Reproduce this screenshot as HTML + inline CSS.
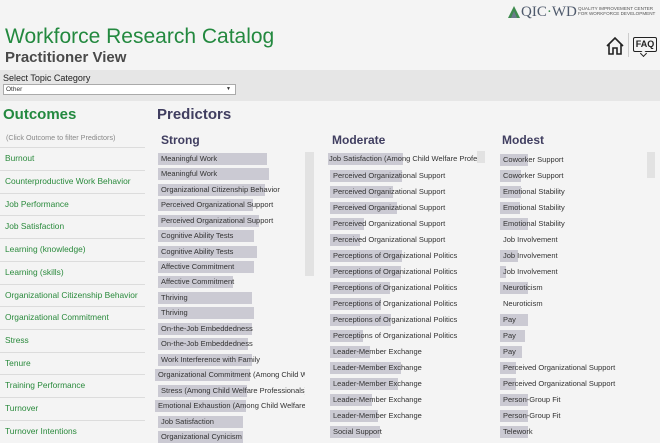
<!DOCTYPE html>
<html><head><meta charset="utf-8"><style>
*{margin:0;padding:0;box-sizing:border-box}
body{width:660px;height:442px;overflow:hidden;background:#f4f4f4;font-family:"Liberation Sans",sans-serif;position:relative}
.a{position:absolute;white-space:nowrap}
.r{position:absolute;height:12px;font-size:7.5px;color:#333;line-height:12px;white-space:nowrap}
.r b{position:absolute;left:0;top:0;height:12px;background:#cbcad3;font-weight:normal}
.r span{position:relative;padding-left:3px}
.o{position:absolute;left:5px;font-size:8.4px;color:#2a8a3c;line-height:12px}
.ln{position:absolute;left:0;width:145px;height:1px;background:#dcdcdc}
</style></head><body>
<div class="a" style="left:5px;top:25px;font-size:21px;color:#23893f">Workforce Research Catalog</div>
<div class="a" style="left:5px;top:49px;font-size:15px;font-weight:bold;color:#4a4a4a">Practitioner View</div>
<div class="a" style="left:507px;top:5px;width:14px;height:14px;"><svg width="14" height="14"><polygon points="7,1 13,13 1,13" fill="#3e8a4e"/><polygon points="7,6 10,13 4,13" fill="#6b7a8c"/></svg></div>
<div class="a" style="left:521px;top:4px;font-family:'Liberation Serif',serif;font-size:15px;color:#4f5a6c">QIC<span style="color:#3a8a4a">·</span>WD</div>
<div class="a" style="left:578px;top:6px;font-size:4.6px;color:#555;line-height:5px">QUALITY IMPROVEMENT CENTER<br>FOR WORKFORCE DEVELOPMENT</div>
<svg class="a" style="left:605px;top:36px" width="20" height="20" viewBox="0 0 20 20"><path d="M2 10 L10 2 L18 10 M4 8 V18 H8 V12 H12 V18 H16 V8" fill="none" stroke="#222" stroke-width="1.6"/></svg>
<div class="a" style="left:628px;top:33px;width:1px;height:24px;background:#ccc"></div>
<div class="a" style="left:633px;top:37px;width:24px;height:15px;border:1.5px solid #222;border-radius:2px;font-size:9px;font-weight:bold;text-align:center;line-height:12px;color:#222">FAQ</div>
<div class="a" style="left:641px;top:51px;width:5px;height:5px;border-right:1.5px solid #222;border-bottom:1.5px solid #222;transform:rotate(45deg);background:#f4f4f4"></div>
<div class="a" style="left:0;top:70px;width:660px;height:31px;background:#e6e6e6"></div>
<div class="a" style="left:3px;top:73px;font-size:9px;color:#222">Select Topic Category</div>
<div class="a" style="left:3px;top:84px;width:233px;height:11px;background:#fff;border:1px solid #aaa;font-size:6.5px;line-height:9px;padding-left:2px;color:#333">Other<span style="position:absolute;right:4px;font-size:5px">▼</span></div>
<div class="a" style="left:3px;top:106px;font-size:15px;font-weight:bold;color:#23893f">Outcomes</div>
<div class="a" style="left:157px;top:106px;font-size:15px;font-weight:bold;color:#403e60">Predictors</div>
<div class="a" style="left:6px;top:133px;font-size:7.2px;color:#888">(Click Outcome to filter Predictors)</div>
<div class="ln" style="top:147px"></div><div class="o" style="top:152px">Burnout</div>
<div class="ln" style="top:170px"></div><div class="o" style="top:175px">Counterproductive Work Behavior</div>
<div class="ln" style="top:193px"></div><div class="o" style="top:198px">Job Performance</div>
<div class="ln" style="top:215px"></div><div class="o" style="top:220px">Job Satisfaction</div>
<div class="ln" style="top:238px"></div><div class="o" style="top:243px">Learning (knowledge)</div>
<div class="ln" style="top:261px"></div><div class="o" style="top:266px">Learning (skills)</div>
<div class="ln" style="top:284px"></div><div class="o" style="top:289px">Organizational Citizenship Behavior</div>
<div class="ln" style="top:306px"></div><div class="o" style="top:311px">Organizational Commitment</div>
<div class="ln" style="top:329px"></div><div class="o" style="top:334px">Stress</div>
<div class="ln" style="top:352px"></div><div class="o" style="top:357px">Tenure</div>
<div class="ln" style="top:374px"></div><div class="o" style="top:379px">Training Performance</div>
<div class="ln" style="top:397px"></div><div class="o" style="top:402px">Turnover</div>
<div class="ln" style="top:420px"></div><div class="o" style="top:425px">Turnover Intentions</div>

<div class="a" style="left:161px;top:133px;font-size:12px;font-weight:bold;color:#403e60">Strong</div>
<div class="a" style="left:332px;top:133px;font-size:12px;font-weight:bold;color:#403e60">Moderate</div>
<div class="a" style="left:502px;top:133px;font-size:12px;font-weight:bold;color:#403e60">Modest</div>
<div class="a" style="left:305px;top:152px;width:9px;height:124px;background:#e2e2e2"></div>
<div class="a" style="left:477px;top:151px;width:8px;height:12px;background:#e2e2e2"></div>
<div class="a" style="left:647px;top:152px;width:8px;height:26px;background:#e2e2e2"></div>

<div class="r" style="left:158px;top:153px"><b style="width:109px"></b><span>Meaningful Work</span></div>
<div class="r" style="left:158px;top:168px"><b style="width:111px"></b><span>Meaningful Work</span></div>
<div class="r" style="left:158px;top:184px"><b style="width:107px"></b><span>Organizational Citizenship Behavior</span></div>
<div class="r" style="left:158px;top:199px"><b style="width:95px"></b><span>Perceived Organizational Support</span></div>
<div class="r" style="left:158px;top:215px"><b style="width:101px"></b><span>Perceived Organizational Support</span></div>
<div class="r" style="left:158px;top:230px"><b style="width:96px"></b><span>Cognitive Ability Tests</span></div>
<div class="r" style="left:158px;top:246px"><b style="width:99px"></b><span>Cognitive Ability Tests</span></div>
<div class="r" style="left:158px;top:261px"><b style="width:96px"></b><span>Affective Commitment</span></div>
<div class="r" style="left:158px;top:276px"><b style="width:75px"></b><span>Affective Commitment</span></div>
<div class="r" style="left:158px;top:292px"><b style="width:94px"></b><span>Thriving</span></div>
<div class="r" style="left:158px;top:307px"><b style="width:96px"></b><span>Thriving</span></div>
<div class="r" style="left:158px;top:323px"><b style="width:94px"></b><span>On-the-Job Embeddedness</span></div>
<div class="r" style="left:158px;top:338px"><b style="width:90px"></b><span>On-the-Job Embeddedness</span></div>
<div class="r" style="left:158px;top:354px"><b style="width:94px"></b><span>Work Interference with Family</span></div>
<div class="r" style="left:155px;top:369px;width:150px;overflow:hidden"><b style="width:95px"></b><span>Organizational Commitment (Among Child Welfare</span></div>
<div class="r" style="left:158px;top:385px;width:147px;overflow:hidden"><b style="width:89px"></b><span>Stress (Among Child Welfare Professionals)</span></div>
<div class="r" style="left:155px;top:400px;width:150px;overflow:hidden"><b style="width:91px"></b><span>Emotional Exhaustion (Among Child Welfare</span></div>
<div class="r" style="left:158px;top:416px"><b style="width:85px"></b><span>Job Satisfaction</span></div>
<div class="r" style="left:158px;top:431px"><b style="width:85px"></b><span>Organizational Cynicism</span></div>

<div class="r" style="left:328px;top:153px;width:149px;overflow:hidden"><b style="width:75px"></b><span style="padding-left:1px">Job Satisfaction (Among Child Welfare Professionals)</span></div>
<div class="r" style="left:330px;top:170px"><b style="width:72px"></b><span>Perceived Organizational Support</span></div>
<div class="r" style="left:330px;top:186px"><b style="width:63px"></b><span>Perceived Organizational Support</span></div>
<div class="r" style="left:330px;top:202px"><b style="width:67px"></b><span>Perceived Organizational Support</span></div>
<div class="r" style="left:330px;top:218px"><b style="width:34px"></b><span>Perceived Organizational Support</span></div>
<div class="r" style="left:330px;top:234px"><b style="width:30px"></b><span>Perceived Organizational Support</span></div>
<div class="r" style="left:330px;top:250px"><b style="width:72px"></b><span>Perceptions of Organizational Politics</span></div>
<div class="r" style="left:330px;top:266px"><b style="width:71px"></b><span>Perceptions of Organizational Politics</span></div>
<div class="r" style="left:330px;top:282px"><b style="width:60px"></b><span>Perceptions of Organizational Politics</span></div>
<div class="r" style="left:330px;top:298px"><b style="width:51px"></b><span>Perceptions of Organizational Politics</span></div>
<div class="r" style="left:330px;top:314px"><b style="width:61px"></b><span>Perceptions of Organizational Politics</span></div>
<div class="r" style="left:330px;top:330px"><b style="width:33px"></b><span>Perceptions of Organizational Politics</span></div>
<div class="r" style="left:330px;top:346px"><b style="width:40px"></b><span>Leader-Member Exchange</span></div>
<div class="r" style="left:330px;top:362px"><b style="width:71px"></b><span>Leader-Member Exchange</span></div>
<div class="r" style="left:330px;top:378px"><b style="width:68px"></b><span>Leader-Member Exchange</span></div>
<div class="r" style="left:330px;top:394px"><b style="width:42px"></b><span>Leader-Member Exchange</span></div>
<div class="r" style="left:330px;top:410px"><b style="width:48px"></b><span>Leader-Member Exchange</span></div>
<div class="r" style="left:330px;top:426px"><b style="width:50px"></b><span>Social Support</span></div>

<div class="r" style="left:500px;top:154px"><b style="width:28px"></b><span>Coworker Support</span></div>
<div class="r" style="left:500px;top:170px"><b style="width:21px"></b><span>Coworker Support</span></div>
<div class="r" style="left:500px;top:186px"><b style="width:21px"></b><span>Emotional Stability</span></div>
<div class="r" style="left:500px;top:202px"><b style="width:20px"></b><span>Emotional Stability</span></div>
<div class="r" style="left:500px;top:218px"><b style="width:28px"></b><span>Emotional Stability</span></div>
<div class="r" style="left:500px;top:234px"><span>Job Involvement</span></div>
<div class="r" style="left:500px;top:250px"><b style="width:18px"></b><span>Job Involvement</span></div>
<div class="r" style="left:500px;top:266px"><b style="width:6px"></b><span>Job Involvement</span></div>
<div class="r" style="left:500px;top:282px"><b style="width:28px"></b><span>Neuroticism</span></div>
<div class="r" style="left:500px;top:298px"><span>Neuroticism</span></div>
<div class="r" style="left:500px;top:314px"><b style="width:28px"></b><span>Pay</span></div>
<div class="r" style="left:500px;top:330px"><b style="width:25px"></b><span>Pay</span></div>
<div class="r" style="left:500px;top:346px"><b style="width:22px"></b><span>Pay</span></div>
<div class="r" style="left:500px;top:362px"><b style="width:16px"></b><span>Perceived Organizational Support</span></div>
<div class="r" style="left:500px;top:378px"><b style="width:16px"></b><span>Perceived Organizational Support</span></div>
<div class="r" style="left:500px;top:394px"><b style="width:28px"></b><span>Person-Group Fit</span></div>
<div class="r" style="left:500px;top:410px"><b style="width:28px"></b><span>Person-Group Fit</span></div>
<div class="r" style="left:500px;top:426px"><b style="width:28px"></b><span>Telework</span></div>
</body></html>
